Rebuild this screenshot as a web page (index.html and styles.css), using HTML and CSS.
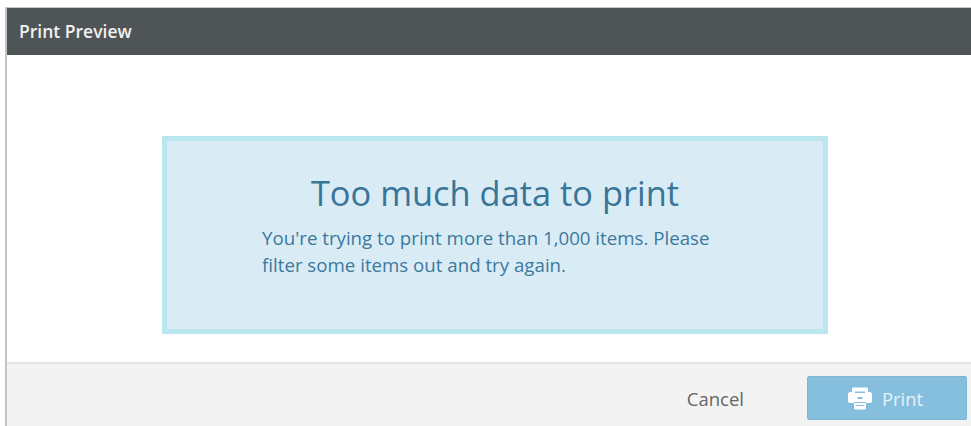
FILE: index.html
```html
<!DOCTYPE html>
<html lang="en">
<head>
<meta charset="utf-8">
<title>Print Preview</title>
<link rel="stylesheet" href="styles.css">
</head>
<body>
<div class="dialog">
  <header class="dialog-header">Print Preview</header>
  <main class="dialog-body">
    <section class="notice">
      <h1 class="notice-title">Too much data to print</h1>
      <p class="notice-text">You're trying to print more than 1,000 items. Please filter some items out and try again.</p>
    </section>
  </main>
  <footer class="dialog-footer">
    <span class="cancel">Cancel</span>
    <button class="print-button" type="button">
      <svg class="print-icon" width="24" height="23" viewBox="0 0 24 23" aria-hidden="true">
        <path fill="#fff" d="M5 0.500h14a1 1 0 0 1 1 1V5h1.500A2.500 2.500 0 0 1 24 7.500v6a2.500 2.500 0 0 1-2.500 2.500H18v5.500a1 1 0 0 1-1 1H7a1 1 0 0 1-1-1V16H2.500A2.500 2.500 0 0 1 0 13.500v-6A2.500 2.500 0 0 1 2.500 5H4V1.500a1 1 0 0 1 1-1z"/>
        <path fill="#86bfde" d="M7 4.500h10v1.500H7zM9.500 10h5v2h-5zM6 15h12v1H6zM8 18h8v1H8z"/>
      </svg>
      <span>Print</span>
    </button>
  </footer>
</div>
</body>
</html>
```
FILE: styles.css
```css
html, body {
  margin: 0;
  padding: 0;
  background: #fff;
}

body {
  padding: 7px 0 0 5px;
  height: 426px;
  box-sizing: border-box;
  overflow: hidden;
  font-family: "Open Sans", sans-serif;
}

.dialog {
  height: 419px;
  display: flex;
  flex-direction: column;
  border-left: 2px solid #c4c4c4;
  border-top: 1px solid #c4c4c4;
}

.dialog-header {
  height: 47px;
  flex: none;
  box-sizing: border-box;
  padding: 0 0 0 12px;
  background: #4f5457;
  color: #f1f1f1;
  font-size: 17.500px;
  font-weight: 600;
  line-height: 46px;
}

.dialog-body {
  flex: 1;
  display: flex;
  justify-content: flex-start;
  padding: 81px 0 0 155px;
  box-sizing: border-box;
  background: #fff;
}

.notice {
  width: 666px;
  height: 198px;
  box-sizing: border-box;
  padding: 29px 93px 0 95px;
  background: #d9ecf6;
  border: 5px solid #bae6f0;
  color: #3c799c;
}

.notice-title {
  margin: 0 2px 0 0;
  font-size: 34.400px;
  font-weight: 400;
  line-height: 46px;
  text-align: center;
  color: #387596;
}

.notice-text {
  margin: 8px 0 0;
  font-size: 18.700px;
  line-height: 27px;
}

.dialog-footer {
  height: 65px;
  flex: none;
  box-sizing: border-box;
  display: flex;
  align-items: flex-start;
  justify-content: flex-end;
  padding: 12px 4px 0 0;
  background: #f3f3f3;
  border-top: 2px solid #e4e4e4;
}

.cancel {
  margin: 11px 63px 0 0;
  font-size: 18.500px;
  line-height: 24px;
  color: #666;
}

.print-button {
  width: 160px;
  height: 44px;
  display: flex;
  align-items: center;
  justify-content: center;
  gap: 10px;
  padding: 0 3px 0 0;
  background: #86bfde;
  border: 1px solid #7fb6d4;
  border-radius: 2px;
  color: #e6f1f7;
  font-family: inherit;
  font-size: 18.400px;
  font-weight: 400;
}
```
